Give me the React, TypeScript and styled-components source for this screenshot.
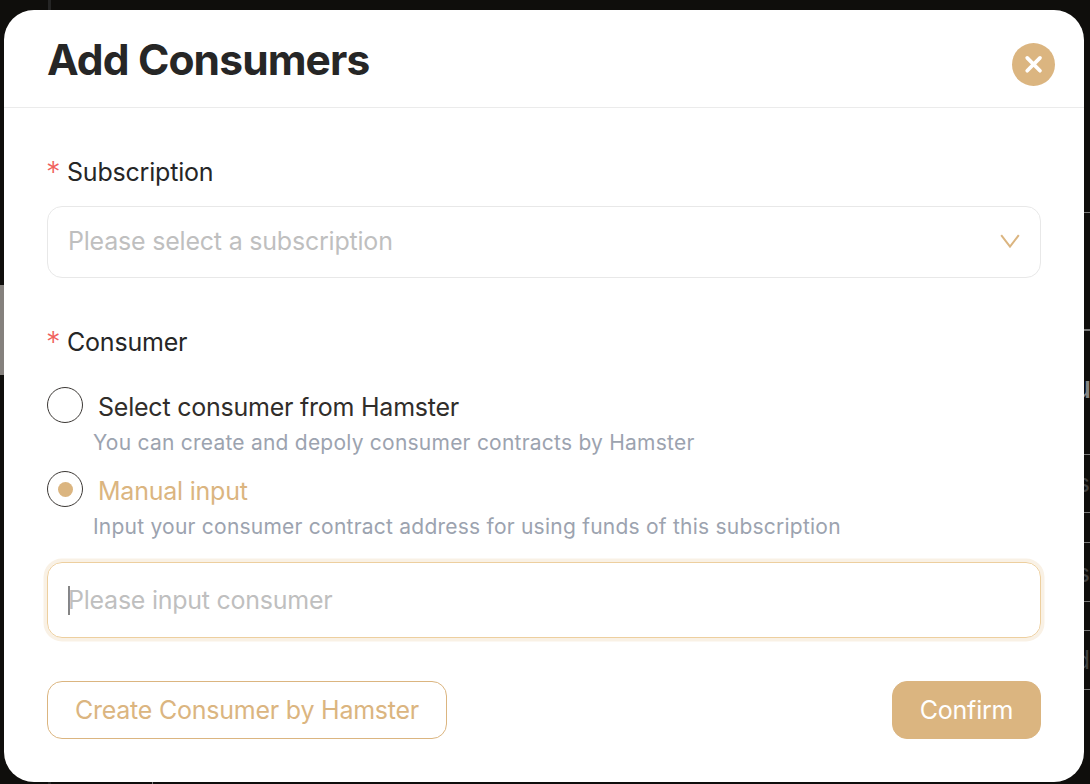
import React from 'react';
import styled, { createGlobalStyle } from 'styled-components';

const gold = '#dbb580';

const GlobalStyle = createGlobalStyle`
  * { box-sizing: border-box; }
  body { margin: 0; background: #0f0e0c; overflow: hidden; }
  body, button, input { font-family: Inter, "Liberation Sans", sans-serif; }
`;

const Screen = styled.div`
  display: grid;
  grid-template: 10px 772px 2px / 4px 1080px 6px;
  width: 1090px;
  height: 784px;
  background: #0f0e0c;
`;

const Edge = styled.div`
  grid-column: 1 / -1;
  display: flex;
`;

const Tick = styled.i<{ $left: number; $width: number; $color: string }>`
  margin-left: ${(p) => p.$left}px;
  width: ${(p) => p.$width}px;
  background: ${(p) => p.$color};
`;

const LeftRail = styled.div`
  padding-top: 275px;
`;

const ScrollThumb = styled.div`
  height: 90px;
  background: #85817d;
`;

const RightRail = styled.div`
  display: flex;
  flex-direction: column;
  padding-top: 202px;
  overflow: hidden;
`;

const Cell = styled.div<{ $height: number; $heading?: boolean; $drop?: number }>`
  flex: none;
  display: flex;
  align-items: center;
  justify-content: flex-end;
  width: 6px;
  height: ${(p) => p.$height}px;
  padding-top: ${(p) => p.$drop ?? 0}px;
  padding-bottom: ${(p) => (p.$heading ? 12 : 0)}px;
  border-top: ${(p) => (p.$heading ? 2 : 1)}px solid #797978;
  overflow: hidden;
  color: ${(p) => (p.$heading ? '#858585' : '#414141')};
  font-size: ${(p) => (p.$heading ? 31 : 25)}px;
  font-weight: ${(p) => (p.$heading ? 500 : 400)};
  letter-spacing: ${(p) => (p.$heading ? -1.5 : 0)}px;
  line-height: 1;
`;

const Dialog = styled.section`
  display: flex;
  flex-direction: column;
  border-radius: 30px;
  background: #fff;
  overflow: hidden;
`;

const Header = styled.header`
  display: flex;
  justify-content: space-between;
  align-items: center;
  height: 98px;
  padding: 0 29px 0 43px;
  border-bottom: 1px solid #ebebeb;
`;

const Title = styled.h1`
  margin: 7px 0 0;
  height: 48px;
  font-size: 42.5px;
  line-height: 44px;
  font-weight: 700;
  letter-spacing: -0.88px;
  color: #262626;
`;

const CloseButton = styled.button`
  display: flex;
  align-items: center;
  justify-content: center;
  width: 43px;
  height: 43px;
  margin-top: 11px;
  padding: 0;
  border: 0;
  border-radius: 50%;
  background: ${gold};
`;

const Form = styled.form`
  display: flex;
  flex-direction: column;
  padding: 48px 43px 0;
`;

const Label = styled.label`
  display: flex;
  align-items: center;
  gap: 7px;
  height: 32px;
  font-size: 25px;
  line-height: 32px;
  letter-spacing: -0.2px;
  color: #262626;
`;

const Star = styled.span`
  width: 13px;
  font-size: 29px;
  font-weight: 300;
  text-indent: -1px;
  color: #f0625d;
`;

const SelectBox = styled.div`
  display: flex;
  align-items: center;
  justify-content: space-between;
  height: 72px;
  margin: 18px 0 48px;
  padding: 0 20px 2px;
  border: 1px solid #e8e8e8;
  border-radius: 15px;
  font-size: 25px;
  letter-spacing: -0.21px;
  color: #bfbfbf;
`;

const Options = styled.div`
  display: flex;
  flex-direction: column;
  margin-top: 28px;
`;

const Option = styled.div`
  display: grid;
  grid-template-columns: 36px 1fr;
  grid-template-rows: 42px 42px;
  height: 84px;
`;

const Radio = styled.span`
  display: flex;
  align-items: center;
  justify-content: center;
  width: 36px;
  height: 36px;
  margin-top: 1px;
  border: 1px solid #3c3835;
  border-radius: 50%;
`;

const Dot = styled.span`
  width: 15px;
  height: 15px;
  border-radius: 50%;
  background: ${gold};
`;

const OptionTitle = styled.span<{ $active?: boolean }>`
  padding-left: 15px;
  font-size: 25px;
  line-height: 42px;
  letter-spacing: -0.23px;
  color: ${(p) => (p.$active ? gold : '#302d2a')};
`;

const Hint = styled.span`
  grid-column: 2;
  padding-left: 10px;
  font-size: 21px;
  line-height: 29px;
  letter-spacing: 0.23px;
  white-space: nowrap;
  color: #9ca3af;
`;

const InputBox = styled.div`
  display: flex;
  align-items: center;
  height: 76px;
  margin-top: 8px;
  padding: 0 20px;
  border: 1px solid #edcf9f;
  border-radius: 15px;
  box-shadow: 0 0 0 3.5px #f9f1e5;
  font-size: 25px;
  letter-spacing: -0.25px;
  color: #bfbfbf;
`;

const Caret = styled.i`
  width: 2px;
  height: 29px;
  margin-right: -2px;
  background: #858585;
`;

const Actions = styled.div`
  display: flex;
  justify-content: space-between;
  margin-top: 43px;
`;

const Button = styled.button<{ $primary?: boolean }>`
  width: ${(p) => (p.$primary ? 149 : 400)}px;
  height: 58px;
  padding: 0;
  border: 1px solid ${gold};
  border-radius: 15px;
  background: ${(p) => (p.$primary ? gold : '#fff')};
  color: ${(p) => (p.$primary ? '#fff' : gold)};
  font-size: 25px;
  letter-spacing: -0.23px;
`;

export default function App() {
  return (
    <>
      <GlobalStyle />
      <Screen>
        <Edge>
          <Tick $left={48} $width={3} $color="#252525" />
        </Edge>
        <LeftRail>
          <ScrollThumb />
        </LeftRail>
        <Dialog role="dialog" aria-label="Add Consumers">
          <Header>
            <Title>Add Consumers</Title>
            <CloseButton type="button" aria-label="Close">
              <svg width="19" height="19" viewBox="0 0 19 19" fill="none" stroke="#fff" strokeWidth="3.7" strokeLinecap="round">
                <path d="M3.2 2.9l12.8 12.8M16 2.9L3.2 15.7" />
              </svg>
            </CloseButton>
          </Header>
          <Form>
            <Label>
              <Star>*</Star>Subscription
            </Label>
            <SelectBox>
              Please select a subscription
              <svg width="20" height="14" viewBox="0 0 20 14" fill="none" stroke={gold} strokeWidth="2">
                <path d="M1.2 1.1L10 12.6L18.8 1.1" />
              </svg>
            </SelectBox>
            <Label>
              <Star>*</Star>Consumer
            </Label>
            <Options>
              <Option>
                <Radio />
                <OptionTitle>Select consumer from Hamster</OptionTitle>
                <Hint>You can create and depoly consumer contracts by Hamster</Hint>
              </Option>
              <Option>
                <Radio>
                  <Dot />
                </Radio>
                <OptionTitle $active>Manual input</OptionTitle>
                <Hint>Input your consumer contract address for using funds of this subscription</Hint>
              </Option>
            </Options>
            <InputBox>
              <Caret />
              Please input consumer
            </InputBox>
            <Actions>
              <Button type="button">Create Consumer by Hamster</Button>
              <Button type="button" $primary>
                Confirm
              </Button>
            </Actions>
          </Form>
        </Dialog>
        <RightRail>
          <Cell $height={117} />
          <Cell $height={125} $heading>u</Cell>
          <Cell $height={58}>s</Cell>
          <Cell $height={30} />
          <Cell $height={59} $drop={3}>s</Cell>
          <Cell $height={29} />
          <Cell $height={59}>d</Cell>
          <Cell $height={30} />
        </RightRail>
        <Edge>
          <Tick $left={48} $width={3} $color="#252525" />
          <Tick $left={101} $width={1} $color="#777" />
        </Edge>
      </Screen>
    </>
  );
}
